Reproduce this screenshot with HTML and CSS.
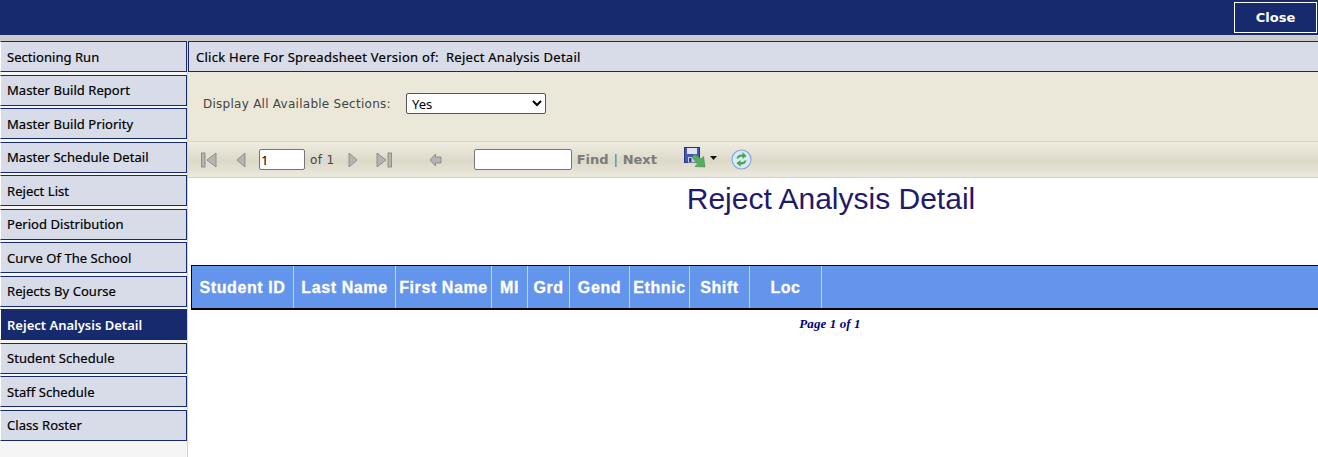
FILE: index.html
```html
<!DOCTYPE html>
<html lang="en">
<head>
  <meta charset="UTF-8">
  <meta name="viewport" content="width=device-width, initial-scale=1.0">
  <title>Reject Analysis Detail</title>
  <link rel="stylesheet" href="styles.css">
</head>
<body>
  <div class="top-bar">
    <button class="close-button">Close</button>
  </div>
  <div class="top-stripe"></div>
  <div class="page">
    <div class="side-menu">
      <a class="side-menu__item">Sectioning Run</a>
      <a class="side-menu__item">Master Build Report</a>
      <a class="side-menu__item">Master Build Priority</a>
      <a class="side-menu__item">Master Schedule Detail</a>
      <a class="side-menu__item">Reject List</a>
      <a class="side-menu__item">Period Distribution</a>
      <a class="side-menu__item">Curve Of The School</a>
      <a class="side-menu__item">Rejects By Course</a>
      <a class="side-menu__item side-menu__item--active">Reject Analysis Detail</a>
      <a class="side-menu__item">Student Schedule</a>
      <a class="side-menu__item">Staff Schedule</a>
      <a class="side-menu__item">Class Roster</a>
    </div>
    <div class="content">
      <div class="sheet-link">Click Here For Spreadsheet Version of:&nbsp; Reject Analysis Detail</div>
      <div class="filter-panel">
        <label class="filter-panel__label">Display All Available Sections:</label>
        <select class="filter-panel__select">
          <option>Yes</option>
          <option>No</option>
        </select>
      </div>
      <div class="toolbar">
        <svg class="tool tool--first" width="16" height="16" viewBox="0 0 16 16"><rect x="0.5" y="1" width="3.5" height="14" fill="#b4b4b0" stroke="#8f8f8c"/><path d="M15 1v14L6 8z" fill="#b4b4b0" stroke="#8f8f8c"/></svg>
        <svg class="tool tool--prev" width="10" height="16" viewBox="0 0 10 16"><path d="M9 1v14L1 8z" fill="#b4b4b0" stroke="#8f8f8c"/></svg>
        <input class="toolbar__page" type="text" value="1">
        <span class="toolbar__of">of 1</span>
        <svg class="tool tool--next" width="10" height="16" viewBox="0 0 10 16"><path d="M1 1v14L9 8z" fill="#b4b4b0" stroke="#8f8f8c"/></svg>
        <svg class="tool tool--last" width="16" height="16" viewBox="0 0 16 16"><path d="M1 1v14L10 8z" fill="#b4b4b0" stroke="#8f8f8c"/><rect x="12" y="1" width="3.5" height="14" fill="#b4b4b0" stroke="#8f8f8c"/></svg>
        <svg class="tool tool--back" width="13" height="14" viewBox="0 0 13 14"><path d="M6.500 1L1 7l5.500 6V10H12V4H6.500z" fill="#b4b4b0" stroke="#8f8f8c"/></svg>
        <input class="toolbar__find" type="text">
        <span class="toolbar__link toolbar__link--find">Find</span>
        <span class="toolbar__sep">|</span>
        <span class="toolbar__link">Next</span>
        <svg class="tool tool--save" width="22" height="21" viewBox="0 0 22 21">
          <rect x="0.500" y="0.500" width="15" height="15" fill="#4a55b5" stroke="#2c3580"/>
          <rect x="3" y="1" width="10" height="6" fill="#dfe4f5"/>
          <rect x="4" y="10" width="8" height="5.500" fill="#c9cbdc"/>
          <rect x="5" y="11" width="2.500" height="4" fill="#39408f"/>
          <path d="M8 10l3-3 6 5 2.500-2.500L21 20l-10-.5 2.500-2.500z" fill="#55ad60" stroke="#3f8a48" stroke-width="0.600"/>
        </svg>
        <svg class="tool tool--drop" width="7" height="4" viewBox="0 0 7 4"><path d="M0 0h7L3.500 4z" fill="#111"/></svg>
        <svg class="tool tool--refresh" width="21" height="21" viewBox="0 0 21 21">
          <circle cx="10.500" cy="10.500" r="9.500" fill="#dbe8f8" stroke="#86a9dc" stroke-width="1.200"/>
          <path d="M5.500 9.500C6 6.500 8.500 5 11.500 5.500V3l4 4-4 3V8C9.500 7.500 8 8.300 7.500 9.500z" fill="#4aa84a"/>
          <path d="M15.500 11.500C15 14.500 12.500 16 9.500 15.500V18l-4-4 4-3v2C11.500 13.500 13 12.700 13.500 11.500z" fill="#4aa84a"/>
        </svg>
      </div>
      <div class="report">
        <h1 class="report__title">Reject Analysis Detail</h1>
        <div class="report-table">
          <div class="report-table__cell report-table__cell--id">Student ID</div>
          <div class="report-table__cell report-table__cell--last">Last Name</div>
          <div class="report-table__cell report-table__cell--first">First Name</div>
          <div class="report-table__cell report-table__cell--mi">MI</div>
          <div class="report-table__cell report-table__cell--grd">Grd</div>
          <div class="report-table__cell report-table__cell--col60">Gend</div>
          <div class="report-table__cell report-table__cell--col60">Ethnic</div>
          <div class="report-table__cell report-table__cell--col60">Shift</div>
          <div class="report-table__cell report-table__cell--loc">Loc</div>
        </div>
        <div class="report__pages">Page 1 of 1</div>
      </div>
    </div>
  </div>
</body>
</html>
```

FILE: styles.css
```css
/* General styles */
html, body {
  margin: 0;
  padding: 0;
  height: 100%;
  overflow: hidden;
  background: #fff;
}

body {
  font-family: "Noto Sans", sans-serif;
  display: flex;
  flex-direction: column;
}

.top-bar {
  background: #172a6e;
  height: 35px;
  display: flex;
  justify-content: flex-end;
  padding-top: 2px;
  box-sizing: border-box;
}

.close-button {
  width: 83px;
  height: 31px;
  margin-right: 1px;
  background: #172a6e;
  border: 1px solid #fff;
  color: #fff;
  font-family: "DejaVu Sans", sans-serif;
  font-size: 13px;
  font-weight: bold;
}

.top-stripe {
  height: 6px;
  background: #cccccc;
}

.page {
  flex: 1;
  display: flex;
  min-height: 0;
}

/* Left menu */
.side-menu {
  width: 187px;
  background: #f5f5f5;
  border-right: 1px solid #d4d4d4;
  flex-shrink: 0;
}

.side-menu__item {
  display: flex;
  align-items: center;
  height: 31px;
  margin-bottom: 2.5px;
  padding-left: 6px;
  box-sizing: border-box;
  background: #d8dce8;
  border: 1px solid #172a6e;
  border-left: 1px solid #fff;
  color: #000;
  font-size: 13px;
  letter-spacing: 0.05px;
  -webkit-text-stroke: 0.2px #000;
}

.side-menu__item--active {
  background: #172a6e;
  color: #fff;
  font-weight: 600;
  letter-spacing: 0;
  -webkit-text-stroke: 0;
}

/* Right side */
.content {
  flex: 1;
  min-width: 0;
  display: flex;
  flex-direction: column;
}

.sheet-link {
  height: 31px;
  display: flex;
  align-items: center;
  padding-left: 7px;
  box-sizing: border-box;
  background: #d8dce8;
  border: 1px solid #172a6e;
  border-right: 0;
  color: #000;
  font-size: 13px;
  letter-spacing: 0.27px;
  -webkit-text-stroke: 0.2px #000;
}

.filter-panel {
  height: 69px;
  display: flex;
  align-items: center;
  padding: 0 0 7px 15px;
  box-sizing: border-box;
  background: #ebe8d9;
}

.filter-panel__label {
  width: 203px;
  padding-top: 1px;
  color: #444;
  font-family: "DejaVu Sans", sans-serif;
  font-size: 12px;
  letter-spacing: 0.26px;
}

.filter-panel__select {
  width: 140px;
  height: 21px;
  background: #fff;
  border: 1px solid #555;
  border-radius: 2px;
  font-family: "Noto Sans", sans-serif;
  font-size: 13px;
  padding: 0 0 2px 1px;
}

.toolbar {
  height: 37px;
  display: flex;
  align-items: center;
  box-sizing: border-box;
  border-top: 1px solid #d4d2cc;
  border-bottom: 1px solid #d4d2cc;
  background: linear-gradient(#efece0, #dcd9c9 55%, #ece9de);
  color: #444;
}

.tool {
  flex-shrink: 0;
}

.tool--first { margin-left: 13px; }
.tool--prev { margin-left: 19px; }
.tool--next { margin-left: 13px; }
.tool--last { margin-left: 18px; }
.tool--back { margin-left: 37px; }
.tool--save { margin-left: 27px; margin-top: -4px; }
.tool--drop { margin-left: 4px; margin-top: -3px; }
.tool--refresh { margin-left: 14px; }

.toolbar__page {
  width: 46px;
  height: 21px;
  margin-left: 13px;
  padding: 0 1px;
  box-sizing: border-box;
  background: #fff;
  border: 1px solid #767676;
  border-radius: 2px;
  font-family: "Noto Sans", sans-serif;
  font-size: 13px;
}

.toolbar__of {
  margin-left: 5px;
  font-family: "DejaVu Sans", sans-serif;
  font-size: 12px;
  letter-spacing: 0.4px;
}

.toolbar__find {
  width: 98px;
  height: 21px;
  margin-left: 32px;
  box-sizing: border-box;
  background: #fff;
  border: 1px solid #767676;
  border-radius: 2px;
}

.toolbar__link {
  color: #7b7b7b;
  font-family: "DejaVu Sans", sans-serif;
  font-size: 13px;
  font-weight: bold;
}

.toolbar__link--find {
  margin-left: 5px;
}

.toolbar__sep {
  margin: 0 3.5px 0 4px;
  color: #555;
  font-size: 12px;
}

/* Report */
.report {
  flex: 1;
  background: #fff;
  padding-left: 3px;
}

.report__title {
  height: 87px;
  margin: 0;
  padding-top: 4px;
  padding-left: 153px;
  box-sizing: border-box;
  text-align: center;
  color: #1f1a6b;
  font-family: "Liberation Sans", sans-serif;
  font-size: 30px;
  font-weight: normal;
}

.report-table {
  display: flex;
  height: 45px;
  box-sizing: border-box;
  background: #6495ed;
  border-top: 1px solid #000;
  border-bottom: 2px solid #000;
  border-left: 1px solid #000;
}

.report-table__cell {
  display: flex;
  align-items: center;
  justify-content: center;
  box-sizing: border-box;
  padding-top: 2px;
  border-right: 1px solid #d0d0d0;
  color: #fff;
  font-family: "Liberation Sans", sans-serif;
  font-size: 16px;
  font-weight: bold;
  letter-spacing: 0.6px;
  -webkit-text-stroke: 0.3px #fff;
  white-space: nowrap;
}

.report-table__cell--id { width: 102px; }
.report-table__cell--last { width: 102px; }
.report-table__cell--first { width: 96px; }
.report-table__cell--mi { width: 36px; }
.report-table__cell--grd { width: 42px; }
.report-table__cell--col60 { width: 60px; }
.report-table__cell--loc { width: 72px; }

.report__pages {
  margin-top: 6px;
  padding-left: 151px;
  text-align: center;
  color: #000080;
  font-family: "Liberation Serif", serif;
  font-size: 13px;
  font-weight: bold;
  font-style: italic;
  letter-spacing: 0.1px;
}
```
